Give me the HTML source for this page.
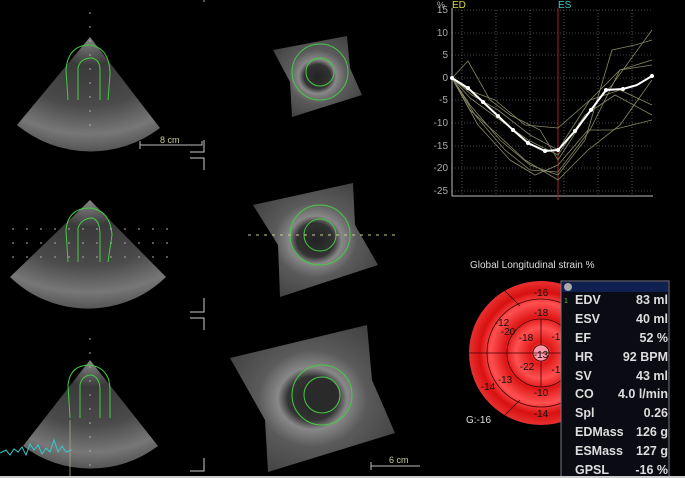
<!DOCTYPE html>
<html><head><style>
html,body{margin:0;padding:0;background:#000;width:685px;height:478px;overflow:hidden}
svg{display:block}
text{font-family:"Liberation Sans",sans-serif}
</style></head><body>
<svg width="685" height="478" viewBox="0 0 685 478" xmlns="http://www.w3.org/2000/svg">
<defs>
<radialGradient id="fan" cx="0.5" cy="0" r="1">
<stop offset="0" stop-color="#888"/><stop offset="0.25" stop-color="#3a3a3a"/><stop offset="0.6" stop-color="#4a4a4a"/><stop offset="0.85" stop-color="#777"/><stop offset="1" stop-color="#555"/>
</radialGradient>
<radialGradient id="sq" cx="0.5" cy="0.5" r="0.6">
<stop offset="0" stop-color="#222"/><stop offset="0.25" stop-color="#333"/><stop offset="0.35" stop-color="#888"/><stop offset="0.55" stop-color="#5a5a5a"/><stop offset="1" stop-color="#404040"/>
</radialGradient>
<radialGradient id="red" cx="0.5" cy="0.5" r="0.5">
<stop offset="0" stop-color="#ff8080"/><stop offset="0.15" stop-color="#e01818"/><stop offset="0.35" stop-color="#ff5050"/><stop offset="0.5" stop-color="#dd1515"/><stop offset="0.7" stop-color="#ff5050"/><stop offset="0.85" stop-color="#d81010"/><stop offset="1" stop-color="#e83030"/>
</radialGradient>
</defs>
<rect width="685" height="478" fill="#000"/>
<path d="M90,37 L17,125 A115,115 0 0 0 160,128 Z" fill="url(#fan)"/>
<path d="M90,200 L10,277 A112,112 0 0 0 166,277 Z" fill="url(#fan)"/>
<path d="M90,360 L23,446 A112,112 0 0 0 158,446 Z" fill="url(#fan)"/>
<g fill="none" stroke="#4c4" stroke-width="1">
<path d="M68,100 L66,70 Q68,45 90,45 Q110,48 110,75 L108,100"/><path d="M78,100 L78,68 Q80,58 92,58 Q100,60 100,70 L100,100"/>
<path d="M68,262 L66,230 Q68,208 90,208 Q110,210 112,235 L108,262"/><path d="M78,262 L78,228 Q82,218 92,218 Q100,220 100,235 L100,262"/>
<path d="M70,418 L68,385 Q70,365 90,365 Q110,368 110,390 L110,418"/><path d="M80,418 L80,385 Q82,375 92,375 Q100,378 100,390 L100,418"/>
</g>
<g stroke="#aaa" stroke-dasharray="2,12" stroke-width="1">
<line x1="90" y1="12" x2="90" y2="135"/><line x1="90" y1="338" x2="90" y2="470"/>
<line x1="12" y1="229" x2="168" y2="229"/><line x1="12" y1="243" x2="168" y2="243"/><line x1="12" y1="257" x2="168" y2="257"/>
<line x1="204" y1="0" x2="204" y2="5"/>
</g>
<polyline points="0,453 6,450 10,455 14,449 18,452 22,447 26,455 30,444 34,450 38,445 42,454 46,448 50,452 54,440 58,452 62,446 66,452 72,450" fill="none" stroke="#3cc" stroke-width="1"/>
<line x1="70" y1="420" x2="70" y2="478" stroke="#aa8" stroke-width="0.8"/>
<g stroke="#ccc" fill="none" stroke-width="1">
<path d="M190,152 H204 V140"/><path d="M190,158 H204 V170"/>
<path d="M190,312 H204 V298"/><path d="M190,318 H204 V330"/>
<path d="M190,471 H204 V458"/>
</g>
<path d="M140,141 V149 M140,145 H202 V141" stroke="#bbb" fill="none"/>
<text x="160" y="143" font-size="9" fill="#cc9">8 cm</text>
<path d="M371,462 V470 M371,466 H420" stroke="#bbb" fill="none"/>
<text x="389" y="463" font-size="9" fill="#cc9">6 cm</text>
<path d="M273,50 L347,36 L350,68 L362,95 L292,117 L290,82 Z" fill="url(#sq)"/>
<path d="M253,205 L353,183 L355,225 L378,265 L280,297 L278,245 Z" fill="url(#sq)"/>
<path d="M230,358 L367,325 L372,380 L395,433 L268,472 L265,420 Z" fill="url(#sq)"/>
<g fill="none" stroke="#4c4" stroke-width="1">
<circle cx="320" cy="72" r="28"/><circle cx="320" cy="72" r="14"/>
<circle cx="320" cy="235" r="30"/><circle cx="320" cy="235" r="16"/>
<circle cx="322" cy="395" r="30"/><circle cx="322" cy="395" r="18"/>
</g>
<circle cx="322" cy="395" r="17" fill="#2a2a2a"/>
<line x1="248" y1="235" x2="398" y2="235" stroke="#cc9" stroke-dasharray="3,5"/>
<g stroke="#888" stroke-dasharray="1,2" stroke-width="0.6">
<line x1="452" y1="10" x2="653" y2="10"/><line x1="452" y1="33" x2="653" y2="33"/><line x1="452" y1="55" x2="653" y2="55"/><line x1="452" y1="78" x2="653" y2="78"/><line x1="452" y1="100" x2="653" y2="100"/><line x1="452" y1="123" x2="653" y2="123"/><line x1="452" y1="146" x2="653" y2="146"/><line x1="452" y1="168" x2="653" y2="168"/><line x1="452" y1="191" x2="653" y2="191"/>
<line x1="462" y1="10" x2="462" y2="195"/><line x1="496" y1="10" x2="496" y2="195"/><line x1="530" y1="10" x2="530" y2="195"/><line x1="564" y1="10" x2="564" y2="195"/><line x1="598" y1="10" x2="598" y2="195"/><line x1="632" y1="10" x2="632" y2="195"/>
</g>
<line x1="452" y1="8" x2="452" y2="196" stroke="#bbb"/>
<line x1="452" y1="196" x2="653" y2="196" stroke="#bbb"/>
<line x1="558" y1="8" x2="558" y2="200" stroke="#a22"/>
<g font-size="10" fill="#aaa" text-anchor="end">
<text x="448" y="13">15</text><text x="448" y="36">10</text><text x="448" y="58">5</text><text x="448" y="81">0</text><text x="448" y="103">-5</text><text x="448" y="126">-10</text><text x="448" y="149">-15</text><text x="448" y="171">-20</text><text x="448" y="194">-25</text>
</g>
<text x="437" y="8" font-size="9" fill="#aaa">%</text>
<text x="452" y="8" font-size="10" fill="#dd4">ED</text>
<text x="558" y="8" font-size="10" fill="#4cc">ES</text>
<g fill="none" stroke="#886" stroke-width="0.8">
<polyline points="452,78 468,61 490,100 510,115 540,130 558,160 590,110 612,85 652,30"/>
<polyline points="452,78 470,105 500,140 530,165 558,175 585,140 612,50 635,45 652,40"/>
<polyline points="452,78 475,115 505,150 530,170 558,172 590,130 620,70 652,60"/>
<polyline points="452,78 468,90 495,100 525,125 558,128 590,100 620,90 652,105"/>
<polyline points="452,78 470,98 500,120 528,140 558,155 585,115 615,95 652,115"/>
<polyline points="452,78 478,125 510,160 535,175 558,165 588,130 612,130 652,120"/>
<polyline points="452,78 470,110 498,135 525,160 558,180 588,150 620,125 652,80"/>
<polyline points="452,78 472,95 498,110 530,135 558,150 590,100 620,70 652,65"/>
</g>
<polyline points="452,78 468,88 483,102 498,116 513,130 528,143 545,151 558,150 575,131 591,110 606,90 623,89 637,85 652,76" fill="none" stroke="#fff" stroke-width="2"/>
<g fill="#fff"><circle cx="452" cy="78" r="2"/><circle cx="468" cy="88" r="2"/><circle cx="483" cy="102" r="2"/><circle cx="498" cy="116" r="2"/><circle cx="513" cy="130" r="2"/><circle cx="528" cy="143" r="2"/><circle cx="545" cy="151" r="2"/><circle cx="558" cy="150" r="2"/><circle cx="575" cy="131" r="2"/><circle cx="591" cy="110" r="2"/><circle cx="606" cy="90" r="2"/><circle cx="623" cy="89" r="2"/><circle cx="652" cy="76" r="2"/></g>
<text x="470" y="268" font-size="10" fill="#ddd">Global Longitudinal strain %</text>
<circle cx="541" cy="353" r="72" fill="url(#red)"/>
<g fill="none" stroke="#400" stroke-width="0.8">
<circle cx="541" cy="353" r="54"/><circle cx="541" cy="353" r="34"/><circle cx="541" cy="353" r="8" fill="#f9a"/>
<line x1="469" y1="353" x2="613" y2="353"/>
<line x1="505" y1="291" x2="520" y2="306"/><line x1="505" y1="415" x2="520" y2="400"/>
<line x1="541" y1="319" x2="541" y2="345"/><line x1="541" y1="361" x2="541" y2="387"/>
</g>
<g font-size="10" fill="#111" text-anchor="middle">
<text x="541" y="296">-16</text><text x="541" y="316">-18</text><text x="502" y="326">-12</text><text x="508" y="335">-20</text><text x="526" y="341">-18</text><text x="541" y="358">-13</text><text x="527" y="370">-22</text><text x="505" y="383">-13</text><text x="488" y="390">-14</text><text x="541" y="396">-10</text><text x="541" y="417">-14</text><text x="556" y="340">-1</text><text x="556" y="373">-1</text>
</g>
<text x="466" y="423" font-size="10" fill="#ddd">G:-16</text>
<rect x="561" y="281" width="108" height="196" fill="#0b0b14" stroke="#778" stroke-width="1"/>
<rect x="562" y="282" width="106" height="10" fill="#102050"/>
<circle cx="568" cy="287" r="4" fill="#aaa"/>
<text x="564" y="303" font-size="7" fill="#4c4">1</text>
<g font-size="12.5" fill="#ddd" font-weight="bold">
<text x="575" y="304">EDV</text><text x="575" y="323">ESV</text><text x="575" y="342">EF</text><text x="575" y="361">HR</text><text x="575" y="380">SV</text><text x="575" y="398">CO</text><text x="575" y="417">Spl</text><text x="575" y="436">EDMass</text><text x="575" y="455">ESMass</text><text x="575" y="474">GPSL</text>
</g>
<g font-size="12.5" fill="#ddd" font-weight="bold" text-anchor="end">
<text x="668" y="304">83 ml</text><text x="668" y="323">40 ml</text><text x="668" y="342">52 %</text><text x="668" y="361">92 BPM</text><text x="668" y="380">43 ml</text><text x="668" y="398">4.0 l/min</text><text x="668" y="417">0.26</text><text x="668" y="436">126 g</text><text x="668" y="455">127 g</text><text x="668" y="474">-16 %</text>
</g>
<rect x="0" y="476" width="685" height="2" fill="#ccc"/>
</svg>
</body></html>
